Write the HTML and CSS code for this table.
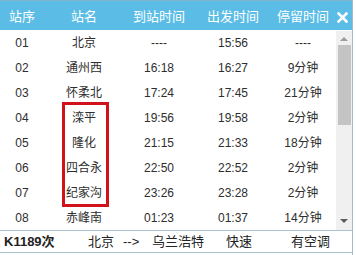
FILE: index.html
```html
<!DOCTYPE html>
<html lang="zh-CN">
<head>
<meta charset="utf-8">
<title>K1189次 时刻表</title>
<link rel="stylesheet" href="styles.css">
</head>
<body>
<div class="panel">
  <div class="head">
    <div class="c">站序</div>
    <div class="c">站名</div>
    <div class="c">到站时间</div>
    <div class="c">出发时间</div>
    <div class="c">停留时间</div>
    <div class="close"><svg width="11" height="11" viewBox="0 0 11 11"><path d="M1.5 1.5 L9.5 9.5 M9.5 1.5 L1.5 9.5" stroke="#fff" stroke-width="2.6" stroke-linecap="square"/></svg></div>
  </div>
  <div class="body">
    <div class="rows">
      <div class="row"><div>01</div><div>北京</div><div>----</div><div>15:56</div><div>----</div></div>
      <div class="row"><div>02</div><div>通州西</div><div>16:18</div><div>16:27</div><div>9分钟</div></div>
      <div class="row"><div>03</div><div>怀柔北</div><div>17:24</div><div>17:45</div><div>21分钟</div></div>
      <div class="row"><div>04</div><div>滦平</div><div>19:56</div><div>19:58</div><div>2分钟</div></div>
      <div class="row"><div>05</div><div>隆化</div><div>21:15</div><div>21:33</div><div>18分钟</div></div>
      <div class="row"><div>06</div><div>四合永</div><div>22:50</div><div>22:52</div><div>2分钟</div></div>
      <div class="row"><div>07</div><div>纪家沟</div><div>23:26</div><div>23:28</div><div>2分钟</div></div>
      <div class="row"><div>08</div><div>赤峰南</div><div>01:23</div><div>01:37</div><div>14分钟</div></div>
    </div>
    <div class="scroll">
      <div class="arrow up"></div>
      <div class="thumb"></div>
      <div class="track"></div>
      <div class="arrow down"></div>
    </div>
    <div class="mark"></div>
  </div>
  <div class="foot">
    <div class="train">K1189次</div>
    <div>北京</div>
    <div>--&gt;</div>
    <div>乌兰浩特</div>
    <div>快速</div>
    <div>有空调</div>
  </div>
  <div class="next">列车时刻</div>
</div>
</body>
</html>
```

FILE: styles.css
```css
html, body {
  margin: 0;
  padding: 0;
  background: #ffffff;
}
body {
  width: 356px;
  height: 255px;
  overflow: hidden;
  font-family: "Liberation Sans", "Noto Sans CJK SC", sans-serif;
  color: #2e2e2e;
}
.panel {
  width: 352px;
  border-right: 1px solid #9fbccc;
}
.head {
  height: 30px;
  background: #5bbde5;
  border-top: 1px solid #7fb4cc;
  box-sizing: border-box;
  display: grid;
  grid-template-columns: 44px 80px 70px 78px 62px 1fr;
  align-items: center;
  color: #ffffff;
  font-size: 13px;
  line-height: 30px;
}
.head .c {
  text-align: center;
  padding-top: 1px;
}
.close {
  display: flex;
  justify-content: center;
  align-items: center;
  padding-top: 2px;
  padding-right: 2px;
}
.body {
  position: relative;
  height: 199px;
  margin-top: 1px;
  display: flex;
  overflow: hidden;
}
.rows {
  width: 334px;
}
.row {
  display: grid;
  grid-template-columns: 44px 80px 70px 78px 62px;
  height: 25px;
  line-height: 25px;
  font-size: 12px;
}
.row div {
  text-align: center;
}
.scroll {
  margin-left: 2px;
  width: 16px;
  height: 199px;
  background: #f0f0f0;
  display: flex;
  flex-direction: column;
  align-items: center;
}
.arrow {
  width: 0;
  height: 0;
  border-left: 4px solid transparent;
  border-right: 4px solid transparent;
}
.arrow.up {
  margin-top: 6px;
  border-bottom: 4px solid #9c9c9c;
}
.thumb {
  margin-top: 4px;
  width: 13px;
  height: 80px;
  background: #c4c4c4;
}
.track {
  flex: 1;
}
.arrow.down {
  margin-bottom: 7px;
  border-top: 4px solid #5a5a5a;
}
.mark {
  position: absolute;
  left: 62px;
  top: 71px;
  width: 41px;
  height: 99px;
  border: 3px solid #d2121b;
}
.foot {
  height: 19px;
  border-top: 1px solid #a8c2d0;
  border-bottom: 1px solid #a8c2d0;
  display: grid;
  grid-template-columns: 84px 35px 29px 74px 65px auto;
  padding-left: 4px;
  padding-top: 2px;
  box-sizing: content-box;
  font-size: 13px;
  line-height: 17px;
  color: #222;
}
.foot .train {
  font-weight: bold;
}
.next {
  margin-left: 22px;
  margin-top: 2px;
  font-size: 14px;
  font-weight: bold;
  line-height: 16px;
  color: #333;
}
```
